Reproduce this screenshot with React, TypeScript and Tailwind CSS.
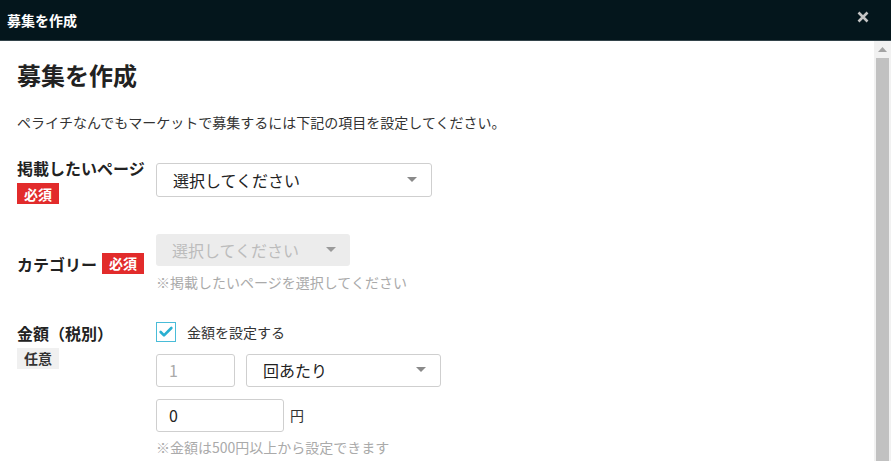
import { Check } from "lucide-react";

const font = {
  fontFamily: '"Noto Sans CJK JP", "Noto Sans", "Liberation Sans", sans-serif',
};

function Caret({ color = "#8a8a8a" }: { color?: string }) {
  return (
    <svg width="10" height="6" viewBox="0 0 10 6">
      <path d="M0 0 L10 0 L5 5 Z" fill={color} />
    </svg>
  );
}

function Required({ className = "" }: { className?: string }) {
  return (
    <span
      className={`inline-flex h-[21px] w-[42px] items-center justify-center bg-[#e22b2b] text-[14px] font-bold leading-none text-white ${className}`}
    >
      必須
    </span>
  );
}

export default function App() {
  return (
    <div style={font} className="flex h-[461px] w-[891px] flex-col overflow-hidden bg-white text-[#333]">
      <header className="flex h-[41px] shrink-0 items-center justify-between border-b border-[#33434a] bg-[#04161c] pl-[7px] pr-[22px]">
        <h1 className="text-[14px] font-bold leading-none text-white">募集を作成</h1>
        <svg width="12" height="12" viewBox="0 0 12 12" className="mb-[6px]">
          <path d="M1.5 1.5 L10.5 10.5 M10.5 1.5 L1.5 10.5" stroke="#c4c4c4" strokeWidth="2.6" />
        </svg>
      </header>

      <div className="flex min-h-0 flex-1">
        <main className="flex-1 pl-[17px]">
          <h2 className="mt-[16px] text-[24px] font-bold leading-[36px] text-[#222]">募集を作成</h2>
          <p className="mt-[19px] text-[14px] leading-[21px]">
            ペライチなんでもマーケットで募集するには下記の項目を設定してください。
          </p>

          {/* 掲載したいページ */}
          <div className="mt-[23px] flex">
            <div className="w-[139px]">
              <div className="text-[16px] font-bold leading-[24px] text-[#222]">掲載したいページ</div>
              <Required className="mt-[3px]" />
            </div>
            <button className="mt-[7px] flex h-[34px] w-[276px] items-center justify-between rounded-[3px] border border-[#cfcfcf] bg-white pl-[16px] pr-[14px] text-[16px] leading-none text-[#222]">
              <span>選択してください</span>
              <Caret />
            </button>
          </div>

          {/* カテゴリー */}
          <div className="mt-[29px] flex">
            <div className="flex w-[139px] items-start pt-[18px]">
              <span className="text-[16px] font-bold leading-[24px] text-[#222]">カテゴリー</span>
              <Required className="ml-[5px] mt-[1px]" />
            </div>
            <div>
              <div className="flex h-[32px] w-[194px] items-center justify-between rounded-[3px] bg-[#ececec] pl-[16px] pr-[14px] text-[16px] leading-none text-[#bcbcbc]">
                <span>選択してください</span>
                <Caret color="#9a9a9a" />
              </div>
              <p className="mt-[6px] text-[14px] leading-[21px] text-[#aaa]">※掲載したいページを選択してください</p>
            </div>
          </div>

          {/* 金額 */}
          <div className="mt-[28px] flex">
            <div className="w-[139px]">
              <div className="text-[16px] font-bold leading-[24px] text-[#222]">金額（税別）</div>
              <span className="mt-[3px] inline-flex h-[21px] w-[42px] items-center justify-center bg-[#f0f0f0] text-[14px] font-bold leading-none text-[#333]">
                任意
              </span>
            </div>
            <div className="pt-[1px]">
              <label className="flex h-[20px] items-center">
                <span className="flex h-[20px] w-[20px] items-center justify-center border border-[#49bcd8] bg-white">
                  <Check size={16} strokeWidth={4} color="#2ab0d1" />
                </span>
                <span className="ml-[11px] text-[14px] leading-[20px]">金額を設定する</span>
              </label>
              <div className="mt-[12px] flex gap-[11px]">
                <div className="flex h-[33px] w-[79px] items-center rounded-[3px] border border-[#cfcfcf] pl-[12px] text-[16px] text-[#aaa]">
                  1
                </div>
                <button className="flex h-[33px] w-[195px] items-center justify-between rounded-[3px] border border-[#cfcfcf] bg-white pl-[16px] pr-[14px] text-[16px] leading-none text-[#222]">
                  <span>回あたり</span>
                  <Caret />
                </button>
              </div>
              <div className="mt-[12px] flex items-center">
                <div className="flex h-[33px] w-[128px] items-center rounded-[3px] border border-[#cfcfcf] pl-[12px] text-[16px] text-[#222]">
                  0
                </div>
                <span className="ml-[6px] text-[14px]">円</span>
              </div>
              <p className="mt-[5px] text-[14px] leading-[21px] text-[#aaa]">※金額は500円以上から設定できます</p>
            </div>
          </div>
        </main>

        {/* scrollbar */}
        <div className="flex w-[17px] shrink-0 flex-col items-center bg-[#f1f1f1]">
          <div className="flex h-[17px] items-center justify-center">
            <svg width="9" height="5" viewBox="0 0 9 5">
              <path d="M0 5 L9 5 L4.5 0 Z" fill="#a3a3a3" />
            </svg>
          </div>
          <div className="w-[13px] flex-1 bg-[#c1c1c1]" />
        </div>
      </div>
    </div>
  );
}
